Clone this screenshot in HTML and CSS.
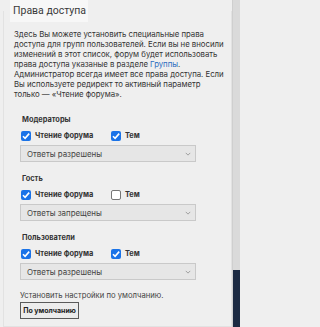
FILE: index.html
```html
<!DOCTYPE html>
<html lang="ru">
<head>
<meta charset="utf-8">
<link rel="stylesheet" href="styles.css">
</head>
<body>
<div class="page">
  <main class="main">
    <fieldset class="box">
      <legend class="legend">Права доступа</legend>
      <p class="intro">Здесь Вы можете установить специальные права доступа для групп пользователей. Если вы не вносили изменений в этот список, форум будет использовать права доступа указаные в разделе <a class="link" href="#">Группы</a>. Администратор всегда имеет все права доступа. Если Вы используете редирект то активный параметр только — «Чтение форума».</p>

      <div class="group">
        <div class="gtitle">Модераторы</div>
        <div class="checks">
          <label class="check"><span class="cb on"><svg viewBox="0 0 10 10"><path d="M2 5.2 L4.1 7.3 L8.2 2.6" /></svg></span>Чтение форума</label>
          <label class="check"><span class="cb on"><svg viewBox="0 0 10 10"><path d="M2 5.2 L4.1 7.3 L8.2 2.6" /></svg></span>Тем</label>
        </div>
        <div class="select"><span>Ответы разрешены</span><svg class="chev" viewBox="0 0 8 5"><path d="M1 1 L4 4 L7 1"/></svg></div>
      </div>

      <div class="group">
        <div class="gtitle">Гость</div>
        <div class="checks">
          <label class="check"><span class="cb on"><svg viewBox="0 0 10 10"><path d="M2 5.2 L4.1 7.3 L8.2 2.6" /></svg></span>Чтение форума</label>
          <label class="check"><span class="cb off"></span>Тем</label>
        </div>
        <div class="select"><span>Ответы запрещены</span><svg class="chev" viewBox="0 0 8 5"><path d="M1 1 L4 4 L7 1"/></svg></div>
      </div>

      <div class="group">
        <div class="gtitle">Пользователи</div>
        <div class="checks">
          <label class="check"><span class="cb on"><svg viewBox="0 0 10 10"><path d="M2 5.2 L4.1 7.3 L8.2 2.6" /></svg></span>Чтение форума</label>
          <label class="check"><span class="cb on"><svg viewBox="0 0 10 10"><path d="M2 5.2 L4.1 7.3 L8.2 2.6" /></svg></span>Тем</label>
        </div>
        <div class="select"><span>Ответы разрешены</span><svg class="chev" viewBox="0 0 8 5"><path d="M1 1 L4 4 L7 1"/></svg></div>
      </div>

      <p class="note">Установить настройки по умолчанию.</p>
      <button class="btn" type="button">По умолчанию</button>
    </fieldset>
  </main>
  <aside class="side">
    <div class="side-top"></div>
    <div class="side-bottom"></div>
  </aside>
</div>
</body>
</html>
```

FILE: styles.css
```css
html, body {
  margin: 0;
  padding: 0;
  background: #efefef;
}
body {
  font-family: Inter, "Noto Sans", sans-serif;
  color: #333;
  width: 240px;
  height: 327px;
  overflow: hidden;
}
.page {
  display: flex;
  height: 327px;
}
.main {
  width: 232px;
  flex: none;
  background: #efefef;
}
.box {
  margin: 0 0 0 3px;
  border: 1px solid #e2e2e2;
  border-top: none;
  padding: 0 6px 0 16px;
  min-height: 327px;
  box-sizing: border-box;
  min-inline-size: 0;
}
.legend {
  font-family: Roboto, "Noto Sans", sans-serif;
  font-size: 10.5px;
  line-height: 22px;
  height: 22px;
  padding: 0 2px 0 3px;
  margin-left: -10px;
  background: #f7f7f7;
  color: #3a3a3a;
}
.intro {
  margin: 7px -2px 0 -6px;
  font-size: 7.8px;
  line-height: 10px;
  letter-spacing: -0.02px;
  color: #333;
}
.link {
  color: #2b6cc0;
  text-decoration: none;
}
.group {
  margin-top: 16px;
}
.group + .group {
  margin-top: 12px;
}
.gtitle {
  font-size: 7.4px;
  font-weight: 700;
  line-height: 10px;
  margin-left: 2px;
}
.checks {
  display: flex;
  margin-top: 5px;
  height: 11px;
}
.check {
  display: flex;
  align-items: center;
  font-size: 7.4px;
  font-weight: 700;
  line-height: 11px;
  gap: 4px;
  margin-left: 1px;
}
.checks .check:first-child {
  width: 89px;
}
.cb {
  width: 10px;
  height: 10px;
  box-sizing: border-box;
  border-radius: 2px;
  display: inline-flex;
  align-items: center;
  justify-content: center;
  flex: none;
}
.cb.on {
  background: #1a73e8;
}
.cb.off {
  background: #fff;
  border: 1px solid #767676;
}
.cb svg {
  width: 10px;
  height: 10px;
}
.cb svg path {
  fill: none;
  stroke: #fff;
  stroke-width: 1.6;
}
.select {
  margin-top: 4px;
  width: 176px;
  height: 17px;
  box-sizing: border-box;
  border: 1px solid #c9c9c9;
  background: #e6e6e6;
  display: flex;
  align-items: center;
  justify-content: space-between;
  padding: 0 4px 0 6px;
  font-size: 7.9px;
  color: #444;
}
.chev {
  width: 6px;
  height: 4px;
}
.chev path {
  fill: none;
  stroke: #888;
  stroke-width: 1;
}
.note {
  margin: 11px 0 0 0;
  font-size: 7.7px;
  line-height: 10px;
  color: #444;
}
.btn {
  display: block;
  margin-top: 1px;
  font-family: inherit;
  font-size: 7px;
  font-weight: 700;
  color: #222;
  background: #ececec;
  border: 1px solid #5a5a5a;
  width: 59px;
  height: 17px;
  padding: 0;
  line-height: 15px;
  text-align: center;
}
.side {
  width: 8px;
  flex: none;
  display: flex;
  flex-direction: column;
  border-left: 1px solid #cfcfcf;
  box-sizing: border-box;
}
.side-top {
  height: 270px;
  background: #dadada;
}
.side-bottom {
  flex: 1;
  background: #1c2a42;
}
```
